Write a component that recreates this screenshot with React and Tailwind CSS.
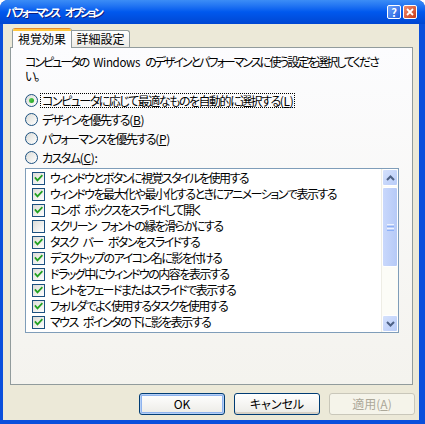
import React from "react";

const items = [
  ["ウィンドウとボタンに視覚スタイルを使用する", true],
  ["ウィンドウを最大化や最小化するときにアニメーションで表示する", true],
  ["コンボ ボックスをスライドして開く", true],
  ["スクリーン フォントの縁を滑らかにする", false],
  ["タスク バー ボタンをスライドする", true],
  ["デスクトップのアイコン名に影を付ける", true],
  ["ドラッグ中にウィンドウの内容を表示する", true],
  ["ヒントをフェードまたはスライドで表示する", true],
  ["フォルダでよく使用するタスクを使用する", true],
  ["マウス ポインタの下に影を表示する", true],
];

function Sp({ text, w = "w-[6px]" }) {
  const parts = text.split(" ");
  return parts.map((p, i) => (
    <React.Fragment key={i}>
      {i > 0 && <span className={"inline-block " + w}> </span>}
      {p}
    </React.Fragment>
  ));
}

function Check({ checked }) {
  return (
    <div className="w-[13px] h-[13px] shrink-0 border border-[#1C5180] bg-linear-to-br from-[#DCDCD7] to-white flex items-center justify-center">
      {checked && (
        <svg width="9" height="9" viewBox="0 0 9 9">
          <path d="M1.5 4 L3.5 6.3 L7.8 1.8" stroke="#21A121" strokeWidth="1.8" fill="none" strokeLinecap="square" />
        </svg>
      )}
    </div>
  );
}

function Radio({ checked }) {
  return (
    <div className="w-[13px] h-[13px] shrink-0 rounded-full border border-[#1C5180] bg-linear-to-br from-[#DCDCD7] to-white flex items-center justify-center">
      {checked && <div className="w-[5px] h-[5px] rounded-full bg-linear-to-br from-[#55D051] to-[#21A121]" />}
    </div>
  );
}

function RadioRow({ checked, label, acc, tail, focus }) {
  return (
    <div className="h-[19px] flex items-center">
      <Radio checked={checked} />
      <span
        className={
          "ml-[2px] px-[1px] leading-[13px] whitespace-nowrap " +
          (focus ? "border border-dotted border-black" : "border border-transparent")
        }
      >
        {label}
        <span className="tracking-[-0.3px]">
          (<span className="underline">{acc}</span>){tail}
        </span>
      </span>
    </div>
  );
}

function Arrow({ up }) {
  return (
    <svg width="9" height="6" viewBox="0 0 9 6">
      <path
        d={up ? "M1 5 L4.5 1.5 L8 5" : "M1 1 L4.5 4.5 L8 1"}
        stroke="#4D6185"
        strokeWidth="2"
        fill="none"
      />
    </svg>
  );
}

function Btn({ children, def, disabled }) {
  return (
    <div
      className={
        "w-[86px] h-[22px] shrink-0 rounded-[3px] flex items-center justify-center leading-none " +
        (disabled
          ? "border border-[#C9C7BA] bg-[#F5F4EA] text-[#ACA899]"
          : def
          ? "border border-[#003C74] bg-linear-to-b from-white to-[#ECEBE6] text-black shadow-[inset_0_0_0_1px_#B5CFF6,inset_0_0_0_2px_#8EB3EE]"
          : "border border-[#003C74] bg-linear-to-b from-white to-[#ECEBE6] text-black shadow-[inset_0_-2px_0_#D6D0C5]")
      }
    >
      {children}
    </div>
  );
}

export default function App() {
  return (
    <div className="w-[425px] h-[424px] flex flex-col bg-[#0A4FDC] rounded-t-[8px] overflow-hidden font-['Noto_Sans_CJK_JP','Noto_Sans',sans-serif] text-[12px] text-black [font-feature-settings:'palt']">
      {/* title bar */}
      <div className="h-[24px] shrink-0 flex items-center pl-[6px] pr-[8px] bg-linear-to-b from-[#3C8DF6] via-[#0058EE] to-[#0046D2]">
        <span className="text-white font-bold text-[11px] tracking-[-2.6px] [text-shadow:1px_1px_0_#0A1E80] whitespace-nowrap pt-[1px]">
          <Sp text="パフォーマンス オプション" w="w-[6px]" />
        </span>
        <div className="ml-auto flex gap-[2px] items-center">
          <div className="w-[14px] h-[14px] rounded-[2px] border border-white bg-linear-to-br from-[#6FA2FA] to-[#1F5CDF] flex items-center justify-center text-white font-bold text-[11px] leading-none">
            ?
          </div>
          <div className="w-[14px] h-[14px] rounded-[2px] border border-white bg-linear-to-br from-[#F08C6E] to-[#C7380F] flex items-center justify-center">
            <svg width="8" height="8" viewBox="0 0 8 8">
              <path d="M1 1 L7 7 M7 1 L1 7" stroke="white" strokeWidth="1.8" />
            </svg>
          </div>
        </div>
      </div>
      {/* client */}
      <div className="flex-1 flex pl-[3px] pr-[6px] pb-[4px] min-h-0">
        <div className="w-[416px] bg-[#ECE9D8] flex flex-col pt-[4px] overflow-hidden">
          {/* tabs */}
          <div className="h-[19px] flex items-end pl-[9px] relative z-10">
            <div className="h-[20px] -mb-[1px] w-[60px] flex flex-col bg-[#FCFCFE] border-x border-[#919B9C] rounded-t-[3px] overflow-hidden">
              <div className="h-[1px] bg-[#E68B2C]" />
              <div className="h-[2px] bg-[#FFC73C]" />
              <div className="flex-1 flex items-center justify-center leading-none pb-[1px]">視覚効果</div>
            </div>
            <div className="h-[17px] w-[58px] flex items-center justify-center leading-none border-t border-r border-[#919B9C] rounded-tr-[3px] bg-linear-to-b from-white to-[#ECEBE6]">
              詳細設定
            </div>
          </div>
          {/* panel */}
          <div className="ml-[7px] w-[403px] h-[338px] shrink-0 border border-[#919B9C] bg-linear-to-b from-[#FCFCFE] to-[#F4F3EE] pl-[14px] pt-[7px] flex flex-col overflow-hidden tracking-[-1.5px]">
            <div className="leading-[14px] whitespace-nowrap tracking-[-2px]">
              <div>
                コンピュータの<span className="inline-block w-[5px]"> </span>
                <span className="tracking-[-0.3px] text-[11.5px]">Windows</span>
                <span className="inline-block w-[5px]"> </span>のデザインとパフォーマンスに使う設定を選択してくださ
              </div>
              <div>い。</div>
            </div>
            <div className="mt-[8px] flex flex-col">
              <RadioRow checked focus label="コンピュータに応じて最適なものを自動的に選択する" acc="L" />
              <RadioRow label="デザインを優先する" acc="B" />
              <RadioRow label="パフォーマンスを優先する" acc="P" />
              <RadioRow label="カスタム" acc="C" tail=":" />
            </div>
            <div className="mt-[1px] w-[374px] h-[165px] shrink-0 border border-[#7F9DB9] bg-white flex">
              <div className="flex-1 min-w-0 pt-[1px] flex flex-col overflow-hidden">
                {items.map(([t, c]) => (
                  <div key={t} className="h-[16px] shrink-0 flex items-center pl-[6px] gap-[5px] whitespace-nowrap leading-none">
                    <Check checked={c} />
                    <span>
                      <Sp text={t} w="w-[5px]" />
                    </span>
                  </div>
                ))}
              </div>
              <div className="w-[17px] shrink-0 flex flex-col bg-[#FCFCF7] border-l border-[#EEEDE5]">
                <div className="h-[17px] rounded-[2px] border border-white bg-linear-to-br from-[#D5E1FC] to-[#B8CCF9] flex items-center justify-center">
                  <Arrow up />
                </div>
                <div className="h-[80px] mt-[1px] rounded-[2px] border border-white bg-linear-to-r from-[#C9D8FC] to-[#B6CAF7] flex flex-col items-center justify-center gap-[1px]">
                  <div className="w-[7px] h-[1px] bg-[#EEF3FE]" />
                  <div className="w-[7px] h-[1px] bg-[#8CB0F8]" />
                  <div className="w-[7px] h-[1px] bg-[#EEF3FE]" />
                  <div className="w-[7px] h-[1px] bg-[#8CB0F8]" />
                </div>
                <div className="flex-1" />
                <div className="h-[17px] rounded-[2px] border border-white bg-linear-to-br from-[#D5E1FC] to-[#B8CCF9] flex items-center justify-center">
                  <Arrow />
                </div>
              </div>
            </div>
          </div>
          {/* buttons */}
          <div className="mt-[8px] flex justify-end gap-[9px] pr-[4px]">
            <Btn def>OK</Btn>
            <Btn>キャンセル</Btn>
            <Btn disabled>
              適用(<span className="underline">A</span>)
            </Btn>
          </div>
        </div>
      </div>
    </div>
  );
}
